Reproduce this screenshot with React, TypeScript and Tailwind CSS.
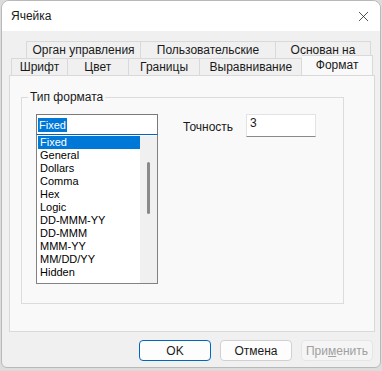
import { X } from "lucide-react";

const backTabs = [
  { label: "Орган управления", w: "w-[115px]" },
  { label: "Пользовательские", w: "w-[135px]" },
  { label: "Основан на", w: "w-[95px]" },
];

const frontTabs = [
  { label: "Шрифт", w: "w-[57px]" },
  { label: "Цвет", w: "w-[61px]" },
  { label: "Границы", w: "w-[72px]" },
  { label: "Выравнивание", w: "w-[102px]" },
];

const formats = [
  "Fixed",
  "General",
  "Dollars",
  "Comma",
  "Hex",
  "Logic",
  "DD-MMM-YY",
  "DD-MMM",
  "MMM-YY",
  "MM/DD/YY",
  "Hidden",
];

export default function App() {
  return (
    <div className="w-[382px] h-[371px] bg-[#dcdcdc] pl-[1px] font-['Liberation_Sans',sans-serif] text-[12px] text-[#1a1a1a]">
      <div className="w-[380px] h-[368px] rounded-t-[8px] rounded-b-[6px] border border-[#b9b9b9] overflow-hidden flex flex-col bg-[#f0f0f0]">
        {/* title bar */}
        <div className="h-[30px] bg-white flex items-center justify-between pl-[9px] pr-[8px]">
          <span className="text-[12px]">Ячейка</span>
          <X size={17} strokeWidth={1.1} className="text-[#222]" />
        </div>

        <div className="flex-1 px-[7px] pt-[10px] flex flex-col">
          {/* tabs */}
          <div className="flex ml-[17px] h-[17px]">
            {backTabs.map((t) => (
              <div
                key={t.label}
                className={`${t.w} border-t border-r first:border-l border-[#d9d9d9] flex items-center justify-center leading-none`}
              >
                {t.label}
              </div>
            ))}
          </div>
          <div className="flex ml-[2px] h-[17px] relative z-10">
            {frontTabs.map((t) => (
              <div
                key={t.label}
                className={`${t.w} border-t border-r first:border-l border-[#d9d9d9] flex items-center justify-center leading-none`}
              >
                {t.label}
              </div>
            ))}
            <div className="w-[71px] h-[20px] -mt-[3px] bg-[#f9f9f9] border-t border-r border-[#d9d9d9] flex justify-center pt-[3px] leading-none">
              Формат
            </div>
          </div>

          {/* panel */}
          <div className="h-[257px] w-[366px] border border-[#d9d9d9] bg-[#f9f9f9] pl-[11px] pt-[21px]">
            <div className="relative w-[323px] h-[207px] border border-[#dcdcdc] pl-[14px] pt-[16px] flex">
              <span className="absolute -top-[7px] left-[6px] bg-[#f9f9f9] px-[2px] leading-none">
                Тип формата
              </span>

              <div className="flex flex-col w-[122px] text-[11px] text-black">
                <div className="h-[21px] border border-[#7a7a7a] border-b-[#0067c0] bg-white flex items-center pl-[1px]">
                  <span className="bg-[#0078d7] text-white px-[1px] leading-[14px]">Fixed</span>
                </div>
                <div className="h-[149px] border border-[#828282] border-t-0 bg-white flex pt-[1px] pl-[1px]">
                  <div className="flex-1 flex flex-col">
                    {formats.map((f, i) => (
                      <div
                        key={f}
                        className={`h-[13px] leading-[13px] pl-[2px] ${i === 0 ? "bg-[#0078d7] text-white" : ""}`}
                      >
                        {f}
                      </div>
                    ))}
                  </div>
                  <div className="w-[17px] bg-[#f0f0f0] pt-[26px] flex justify-center">
                    <div className="w-[3px] h-[52px] rounded-full bg-[#8a8a8a]" />
                  </div>
                </div>
              </div>

              <div className="flex items-start ml-[25px]">
                <span className="mt-[6px] w-[63px] leading-[14px]">Точность</span>
                <div className="w-[70px] h-[23px] bg-white border border-[#e3e3e3] border-b-[#8a8a8a] pl-[3px] pt-[1px] leading-[14px]">
                  3
                </div>
              </div>
            </div>
          </div>

          {/* buttons */}
          <div className="flex justify-end gap-[9px] mt-[8px] pr-0">
            <button className="w-[72px] h-[21px] rounded-[4px] bg-[#fdfdfd] border border-[#0067c0] leading-none">
              OK
            </button>
            <button className="w-[72px] h-[21px] rounded-[4px] bg-[#fdfdfd] border border-[#d0d0d0] leading-none">
              Отмена
            </button>
            <button className="w-[72px] h-[21px] rounded-[4px] bg-[#f5f5f5] border border-[#e5e5e5] text-[#a0a0a0] leading-none">
              При<span className="underline">м</span>енить
            </button>
          </div>
        </div>
      </div>
    </div>
  );
}
